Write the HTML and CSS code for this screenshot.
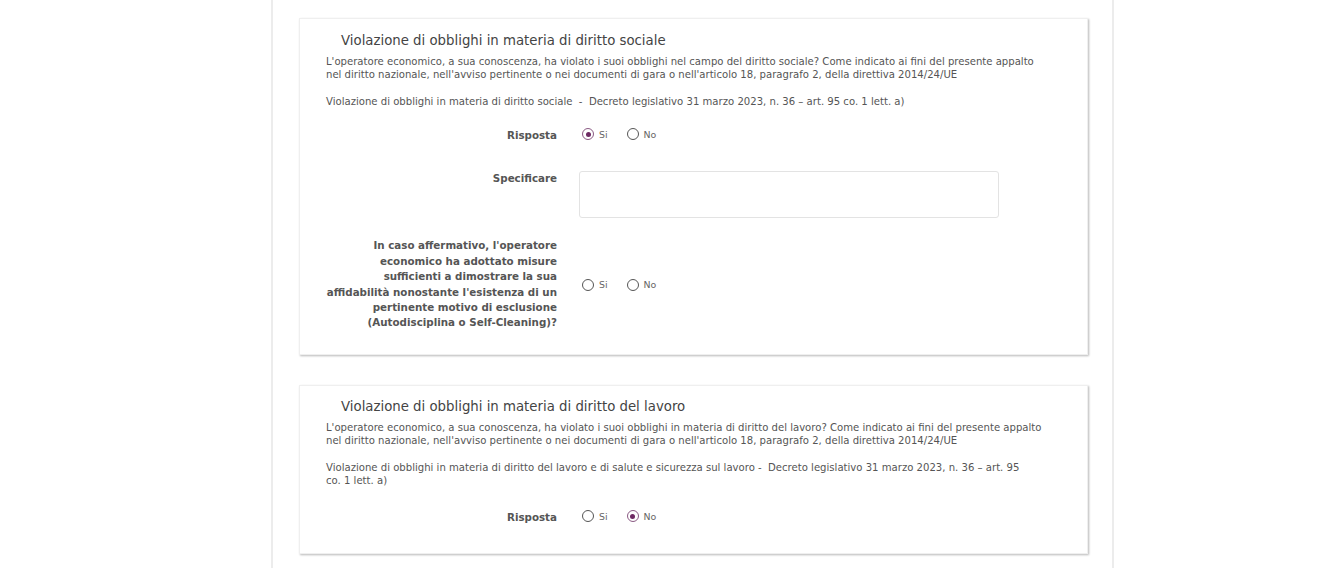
FILE: index.html
```html
<!DOCTYPE html>
<html lang="it">
<head>
<meta charset="utf-8">
<title>Motivi di esclusione</title>
<link rel="stylesheet" href="styles.css">
</head>
<body>
<div class="page">
  <div class="sheet">
    <section class="card">
      <h3 class="card-title">Violazione di obblighi in materia di diritto sociale</h3>
      <p class="desc">L'operatore economico, a sua conoscenza, ha violato i suoi obblighi nel campo del diritto sociale? Come indicato ai fini del presente appalto nel diritto nazionale, nell'avviso pertinente o nei documenti di gara o nell'articolo 18, paragrafo 2, della direttiva 2014/24/UE</p>
      <p class="ref">Violazione di obblighi in materia di diritto sociale &nbsp;- &nbsp;Decreto legislativo 31 marzo 2023, n. 36 – art. 95 co. 1 lett. a)</p>
      <div class="form">
        <div class="row row-answer">
          <div class="label">Risposta</div>
          <div class="control">
            <span class="radio checked"></span><span class="opt">Si</span>
            <span class="radio"></span><span class="opt">No</span>
          </div>
        </div>
        <div class="row row-spec">
          <div class="label">Specificare</div>
          <div class="control"><div class="textbox"></div></div>
        </div>
        <div class="row row-self">
          <div class="label">In caso affermativo, l'operatore economico ha adottato misure sufficienti a dimostrare la sua affidabilità nonostante l'esistenza di un pertinente motivo di esclusione (Autodisciplina o Self-Cleaning)?</div>
          <div class="control">
            <span class="radio"></span><span class="opt">Si</span>
            <span class="radio"></span><span class="opt">No</span>
          </div>
        </div>
      </div>
    </section>

    <section class="card card-second">
      <h3 class="card-title">Violazione di obblighi in materia di diritto del lavoro</h3>
      <p class="desc">L'operatore economico, a sua conoscenza, ha violato i suoi obblighi in materia di diritto del lavoro? Come indicato ai fini del presente appalto nel diritto nazionale, nell'avviso pertinente o nei documenti di gara o nell'articolo 18, paragrafo 2, della direttiva 2014/24/UE</p>
      <p class="ref ref-long">Violazione di obblighi in materia di diritto del lavoro e di salute e sicurezza sul lavoro - &nbsp;Decreto legislativo 31 marzo 2023, n. 36 – art. 95 co. 1 lett. a)</p>
      <div class="form">
        <div class="row row-answer">
          <div class="label">Risposta</div>
          <div class="control">
            <span class="radio"></span><span class="opt">Si</span>
            <span class="radio checked"></span><span class="opt">No</span>
          </div>
        </div>
      </div>
    </section>
  </div>
</div>
</body>
</html>
```

FILE: styles.css
```css
html, body {
  margin: 0;
  padding: 0;
  background: #ffffff;
}

body {
  font-family: "DejaVu Sans", Verdana, sans-serif;
  color: #555555;
  height: 568px;
  overflow: hidden;
}

.page {
  display: flex;
  justify-content: flex-start;
  padding-left: 271px;
}

.sheet {
  width: 843px;
  min-height: 568px;
  border-left: 2px solid #ececec;
  border-right: 2px solid #ececec;
  padding: 18px 24px 0 26px;
  box-sizing: border-box;
}

.card {
  width: 789px;
  box-sizing: border-box;
  background: #fff;
  border: 1px solid #efefef;
  box-shadow: 1px 1px 2px rgba(0, 0, 0, 0.28);
  padding: 13px 26px 23px 26px;
}

.card-second {
  margin-top: 30px;
  padding-top: 12px;
  padding-bottom: 28px;
}

.card-second .form {
  margin-top: 20px;
}

.card-title {
  margin: 0 0 6px 15px;
  font-size: 13.3px;
  font-weight: normal;
  color: #444;
  line-height: 17px;
}

.desc, .ref {
  margin: 0;
  font-size: 10.1px;
  line-height: 13px;
  color: #555;
  padding-right: 12px;
}

.ref {
  margin-top: 14px;
}

.ref-long {
  padding-right: 26px;
}

.form {
  margin-top: 17px;
}

.row {
  display: grid;
  grid-template-columns: 231px 1fr;
  column-gap: 22px;
  align-items: center;
}

.row-answer .label {
  padding-top: 3px;
}

.row-spec {
  margin-top: 28px;
  align-items: start;
}

.row-self {
  margin-top: 20px;
}

.label {
  text-align: right;
  font-size: 10.3px;
  font-weight: bold;
  line-height: 15.4px;
  color: #555;
}

.control {
  display: flex;
  align-items: center;
  font-size: 9.4px;
  color: #666;
}

.radio {
  width: 10px;
  height: 10px;
  border: 1.3px solid #555;
  border-radius: 50%;
  box-sizing: content-box;
  margin-left: 3px;
  margin-right: 5px;
  position: relative;
  flex: none;
}

.radio.checked {
  border-color: #8a5a83;
}

.radio.checked::after {
  content: "";
  position: absolute;
  left: 2.5px;
  top: 2.5px;
  width: 5px;
  height: 5px;
  border-radius: 50%;
  background: #6e2a63;
}

.opt {
  margin-right: 16px;
}

.textbox {
  width: 420px;
  height: 47px;
  box-sizing: border-box;
  border: 1px solid #e3e3e3;
  border-radius: 3px;
  background: #fff;
}
```
